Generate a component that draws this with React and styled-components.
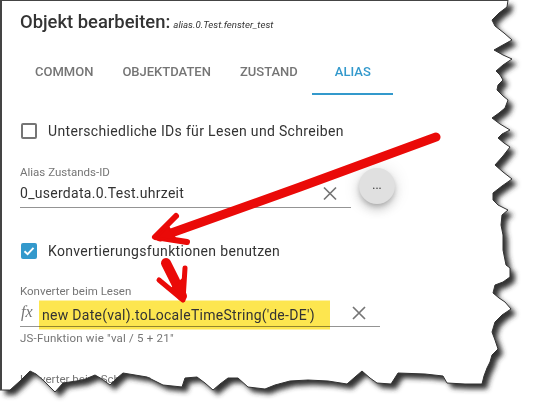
import React from "react";
import styled, { createGlobalStyle } from "styled-components";

const Global = createGlobalStyle`
  html, body { margin: 0; padding: 0; background: #fff; }
  body { font-family: Roboto, "Liberation Sans", sans-serif; }
`;

const Page = styled.div`
  position: relative;
  width: 535px;
  height: 415px;
  overflow: hidden;
  background: #fff;
  box-sizing: border-box;
  padding: 0 20px;
  color: #333;
`;

const Title = styled.h1`
  margin: 0;
  padding-top: 10px;
  height: 44px;
  box-sizing: border-box;
  font-size: 18.4px;
  line-height: 24px;
  font-weight: 500;
  color: #333;
  white-space: nowrap;
`;

const ObjectId = styled.span`
  font-size: 9.7px;
  font-weight: 400;
  font-style: italic;
  margin-left: 3px;
`;

const Tabs = styled.div`
  display: flex;
  height: 51px;
`;

const Tab = styled.div`
  box-sizing: border-box;
  min-width: 81px;
  padding: 20px 14.5px 0;
  margin-left: ${p => (p.$first ? "0.5px" : "0")};
  text-align: center;
  font-size: 13px;
  line-height: 16px;
  font-weight: 500;
  color: ${p => (p.$active ? "#3399cc" : "#757575")};
  border-bottom: 2px solid ${p => (p.$active ? "#3399cc" : "transparent")};
`;

const CheckRow = styled.label`
  display: flex;
  align-items: center;
  gap: 11px;
  height: 20px;
  margin-top: ${p => p.$top}px;
  font-size: 14px;
  letter-spacing: 0.33px;
  color: #333;
`;

const Box = styled.span`
  box-sizing: border-box;
  width: 16px;
  height: 16px;
  margin-left: 1px;
  border-radius: 2px;
  border: ${p => (p.$checked ? "0" : "2px solid #757575")};
  background: ${p => (p.$checked ? "#3399cc" : "transparent")};
  display: flex;
  align-items: center;
  justify-content: center;
`;

const FieldRow = styled.div`
  display: flex;
  align-items: flex-start;
  margin-top: ${p => p.$top}px;
`;

const Field = styled.div`
  width: ${p => p.$width}px;
`;

const FieldLabel = styled.div`
  font-size: 11.5px;
  line-height: 14px;
  color: #757575;
`;

const InputLine = styled.div`
  display: flex;
  align-items: center;
  height: 28px;
  border-bottom: 1px solid #949494;
`;

const InputText = styled.div`
  flex: 1;
  font-size: 14px;
  letter-spacing: 0.28px;
  color: #333;
  white-space: nowrap;
`;

const Clear = styled.span`
  display: flex;
  width: 14px;
  height: 14px;
  margin-right: ${p => p.$right}px;
  transform: translateY(${p => p.$down}px);
`;

const MoreButton = styled.button`
  width: 36px;
  height: 36px;
  margin: 3px 0 0 8px;
  padding: 0 0 3px;
  border: 0;
  border-radius: 50%;
  background: #e0e0e0;
  color: #333;
  font: 400 12px Roboto, sans-serif;
  box-shadow: 0 3px 5px -1px rgba(0,0,0,.2), 0 6px 10px 0 rgba(0,0,0,.14), 0 1px 18px 0 rgba(0,0,0,.12);
`;

const Fx = styled.span`
  display: block;
  width: 19px;
  font-family: "Liberation Serif", serif;
  font-style: italic;
  font-size: 16px;
  color: #757575;
  padding-left: 1px;
  box-sizing: border-box;
`;

const Marked = styled.span`
  display: inline-block;
  margin: 0 22px 0 0;
  width: 291px;
  box-sizing: border-box;
  padding: 0 0 0 3px;
  height: 29px;
  line-height: 28px;
  background: #fde64f;
  mix-blend-mode: multiply;
  transform: translateY(2.5px);
  font-size: 14px;
  letter-spacing: 0.28px;
  color: #333;
  white-space: nowrap;
`;

const Helper = styled.div`
  margin-top: 4px;
  font-size: 11.5px;
  line-height: 14px;
  letter-spacing: 0.2px;
  color: #757575;
`;

const NextLabel = styled(FieldLabel)`
  margin-top: 27px;
`;

const Overlay = styled.svg`
  position: absolute;
  left: 0;
  top: 0;
  pointer-events: none;
`;

const Cross = () => (
  <svg width="14" height="14" viewBox="0 0 14 14">
    <path d="M1 1 L13 13 M13 1 L1 13" stroke="#757575" strokeWidth="1.7" fill="none" />
  </svg>
);

const EDGE =
  "M508 0 L507 7 L499 13 L492 20 L495 26 L504 33 L512 40 L501 46 L494 50 L503 55 L512 59 L503 65 L496 71 L500 75 L503 80 L498 85 L497 90 L503 96 L508 100 L505 108 L499 113 L492 118 L500 124 L510 130 L502 134 L498 138 L504 143 L510 147 L503 156 L495 165 L503 172 L512 179 L502 186 L493 193 L493 200 L498 205 L508 210 L502 215 L501 225 L503 235 L503 250 L506 265 L510 268 L510 277 L503 282 L495 285 L493 293 L499 298 L505 302 L511 309 L502 315 L495 322 L492 332 L495 340 L498 349 L492 355 L490 362 L487 368 L484 376 L482 384 L465 384 L447 383 L443 376 L425 374 L398 373 L391 384 L377 383 L370 378 L362 371 L355 377 L347 384 L328 381 L308 380 L290 381 L275 385 L265 389 L248 387 L238 378 L228 378 L220 384 L213 390 L205 383 L197 377 L185 378 L182 387 L163 385 L155 381 L147 377 L123 373 L117 378 L110 385 L102 379 L95 375 L83 380 L63 383 L55 392 L49 386 L43 380 L36 374 L30 371 L20 381 L10 390 L0 390";

export default function App() {
  return (
    <Page>
      <Global />
      <Title>
        Objekt bearbeiten:<ObjectId>alias.0.Test.fenster_test</ObjectId>
      </Title>
      <Tabs>
        <Tab $first>COMMON</Tab>
        <Tab>OBJEKTDATEN</Tab>
        <Tab>ZUSTAND</Tab>
        <Tab $active>ALIAS</Tab>
      </Tabs>
      <CheckRow $top={26}>
        <Box />
        Unterschiedliche IDs für Lesen und Schreiben
      </CheckRow>
      <FieldRow $top={24}>
        <Field $width={331}>
          <FieldLabel>Alias Zustands-ID</FieldLabel>
          <InputLine>
            <InputText>0_userdata.0.Test.uhrzeit</InputText>
            <Clear $right={14} $down={0.5}><Cross /></Clear>
          </InputLine>
        </Field>
        <MoreButton>...</MoreButton>
      </FieldRow>
      <CheckRow $top={33}>
        <Box $checked>
          <svg width="12" height="12" viewBox="0 0 12 12">
            <path d="M1.5 6.2 L4.6 9.2 L10.5 2.8" stroke="#fff" strokeWidth="1.9" fill="none" />
          </svg>
        </Box>
        Konvertierungsfunktionen benutzen
      </CheckRow>
      <FieldRow $top={23}>
        <Field $width={360}>
          <FieldLabel>Konverter beim Lesen</FieldLabel>
          <InputLine>
            <Fx>fx</Fx>
            <Marked>new Date(val).toLocaleTimeString('de-DE')</Marked>
            <Clear $right={14} $down={1}><Cross /></Clear>
          </InputLine>
          <Helper>JS-Funktion wie "val / 5 + 21"</Helper>
          <NextLabel>Konverter beim Schreiben</NextLabel>
        </Field>
      </FieldRow>

      <Overlay width="535" height="415" viewBox="0 0 535 415">
        <defs>
          <filter id="blur" x="-10%" y="-10%" width="120%" height="120%">
            <feGaussianBlur stdDeviation="2.5" />
          </filter>
          <clipPath id="outside">
            <path d={`${EDGE} L0 415 L535 415 L535 0 Z`} />
          </clipPath>
        </defs>
        <path d={`${EDGE} L0 415 L535 415 L535 0 Z`} fill="#fff" />
        <g clipPath="url(#outside)">
          <path d={`${EDGE} L0 0 Z`} transform="translate(5 5)" fill="#333" filter="url(#blur)" />
        </g>
        <path d={EDGE} fill="none" stroke="#333" strokeWidth="1" />
        <path d="M1 390 L1 0 L508 0" fill="none" stroke="#444" strokeWidth="2" />
        <g fill="#ea0a08" stroke="#ea0a08" strokeLinecap="round" strokeLinejoin="round">
          <path d="M436 137 L300 187 L160 237" strokeWidth="9" fill="none" />
          <path d="M176 216 L155 237 L187 242" strokeWidth="6" fill="none" />
          <path d="M168 226 L156 238 L176 240 Z" strokeWidth="2" />
          <path d="M166 263 L175 281 L182 296" strokeWidth="10" fill="none" />
          <path d="M159 280 L183 300 L185 268" strokeWidth="5" fill="none" />
          <path d="M172 288 L184 301 L184 278 Z" strokeWidth="2" />
        </g>
      </Overlay>
    </Page>
  );
}
